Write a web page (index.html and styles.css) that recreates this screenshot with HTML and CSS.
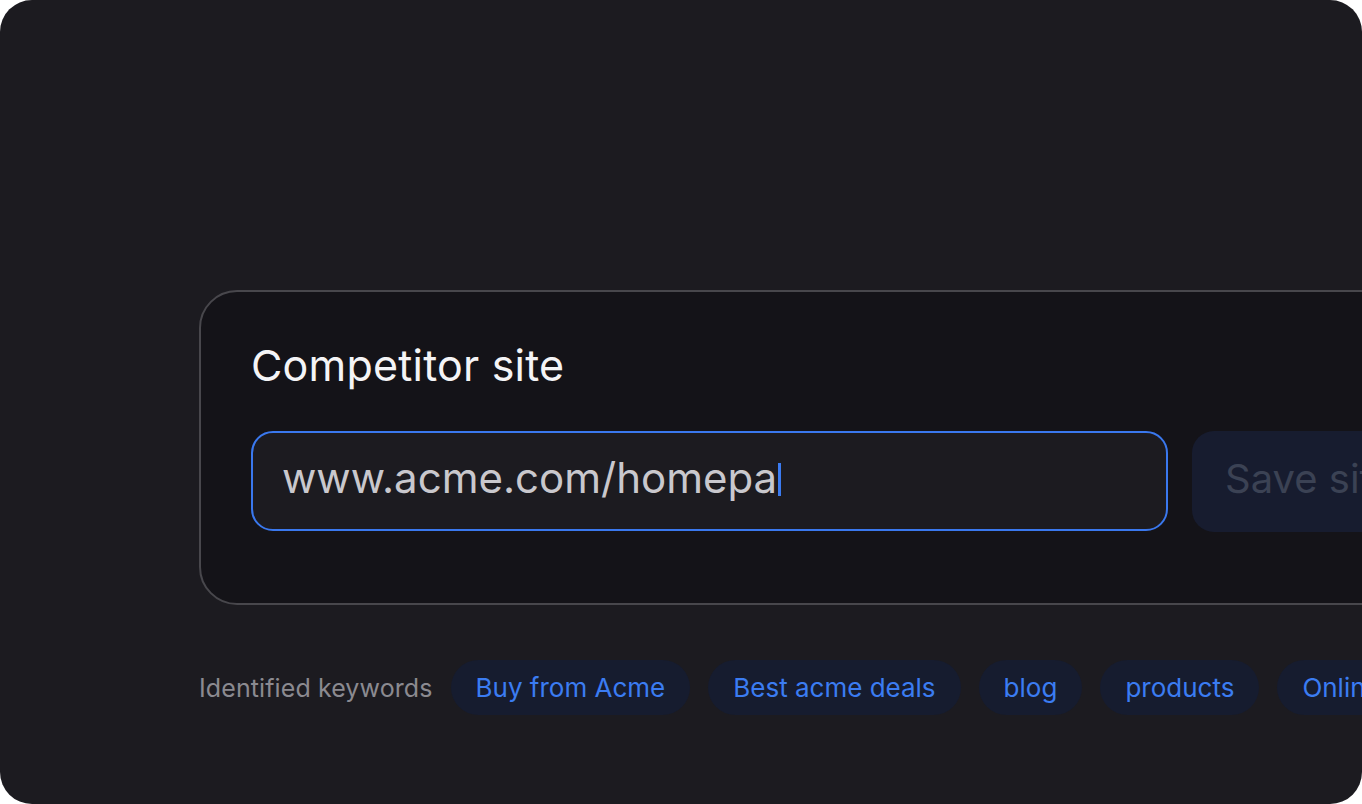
FILE: index.html
```html
<!DOCTYPE html>
<html lang="en">
<head>
<meta charset="utf-8">
<link rel="stylesheet" href="styles.css">
</head>
<body>
<div class="frame">
  <section class="card">
    <h1 class="title">Competitor site</h1>
    <div class="row">
      <div class="input"><span class="value">www.acme.com/homepa</span><span class="caret"></span></div>
      <button class="save">Save site</button>
    </div>
  </section>
  <div class="keywords">
    <span class="label">Identified keywords</span>
    <span class="chip">Buy from Acme</span>
    <span class="chip">Best acme deals</span>
    <span class="chip">blog</span>
    <span class="chip">products</span>
    <span class="chip">Online store</span>
  </div>
</div>
</body>
</html>
```
FILE: styles.css
```css
html, body { margin: 0; padding: 0; background: #ffffff; }
body { font-family: Inter, "Noto Sans", sans-serif; }
.frame {
  width: 1362px; height: 804px; box-sizing: border-box;
  background: #1c1b20; border-radius: 32px; overflow: hidden;
  padding: 290px 0 0 199px;
}
.card {
  width: 1300px; box-sizing: border-box;
  border: 2px solid #48474c; border-radius: 38px;
  background: #141318;
  padding: 50px 50px 71px 50px;
}
.title {
  margin: 0; font-weight: 400; font-size: 43px; line-height: 46px;
  color: #f4f4f6; letter-spacing: 0.2px;
}
.row { display: flex; gap: 24px; margin-top: 43px; }
.input {
  width: 917px; height: 100px; box-sizing: border-box; flex: none;
  border: 2px solid #3a78ee; border-radius: 22px; background: #1c1b20;
  display: flex; align-items: center; padding: 0 0 8px 29px;
}
.value { font-size: 42px; color: #c9c8cd; letter-spacing: 0; }
.caret { width: 3px; height: 33px; background: #3b7bf0; margin-left: 1px; margin-top: 4px; }
.save {
  flex: none; width: 260px; height: 101px; border: 0; border-radius: 22px;
  background: #171c2f; color: #3b4254; font-family: inherit; font-size: 40px;
  text-align: left; padding: 0 0 6px 33px; white-space: nowrap;
}
.keywords { display: flex; align-items: center; gap: 18px; margin-top: 55px; white-space: nowrap; }
.label { font-size: 25px; color: #8b8a90; letter-spacing: 0.1px; }
.chip {
  flex: none; height: 55px; box-sizing: border-box; padding: 0 25px;
  display: flex; align-items: center; border-radius: 28px;
  background: #161c2f; color: #3b7cf2; font-size: 26px;
}
```
